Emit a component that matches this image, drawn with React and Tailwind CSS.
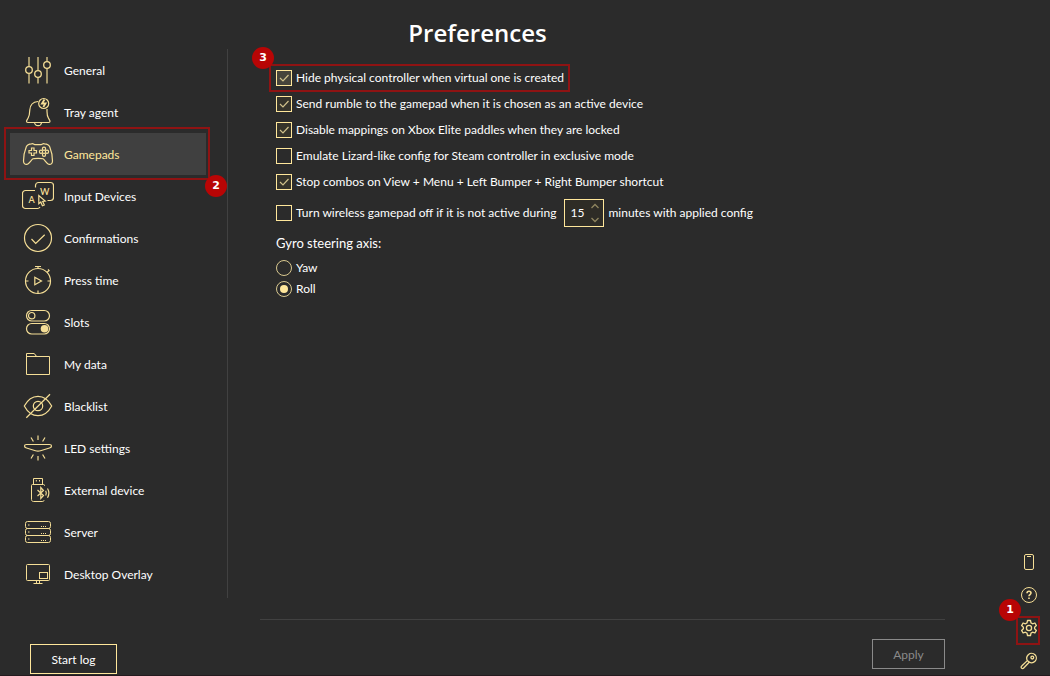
import { useState } from "react";
import clsx from "clsx";

const icons = {
  general: (
    <>
      <g stroke="#a1946a" strokeWidth="2">
        <path d="M7 3v9M7 20v9.500M16 3v13M16 24v5.500M25 3v4M25 15v14.500" />
      </g>
      <circle cx="7" cy="16" r="3.300" strokeWidth="1.300" />
      <circle cx="16" cy="20" r="3.300" strokeWidth="1.300" />
      <circle cx="25" cy="11" r="3.300" strokeWidth="1.300" />
    </>
  ),
  tray: (
    <g strokeWidth="1.200">
      <path d="M16 5.500C10.500 6 8 9.500 7.800 14c-.1 4-.4 6-1.800 8.300-.8 1.400-1.500 2.200-1.500 3 0 .8.500 1.200 1.300 1.200h21c.8 0 1.200-.5 1.200-1.200 0-.8-.8-1.800-1.500-3-1.200-2-1.500-4-1.500-6.800v-2.500" />
      <path d="M12.500 26.500c.3 2 1.700 3.200 3.600 3.200s3.200-1.200 3.600-3.200" />
      <circle cx="21.700" cy="7.500" r="5" />
      <path d="M22.500 3.500l-2.500 4h3.500l-2.200 3.500" strokeWidth="1.800" />
    </g>
  ),
  gamepads: (
    <g strokeWidth="1.200">
      <path d="M9.500 5.800c2-.5 2.500.9 4 .9h5c1.500 0 2-1.400 4-.9 2.800.2 4.300.8 5.200 3 1.600 4 2.900 9.800 2.800 14.200 0 2.600-1.800 4-3.900 3.200-2.200-.8-3.600-4.200-5.600-5.400-1-.6-8.900-.6-10 0-2 1.200-3.400 4.600-5.600 5.400-2.100.8-3.900-.6-3.900-3.200-.1-4.400 1.200-10.200 2.800-14.200.9-2.200 2.400-2.800 5.200-3z" />
      <path d="M9.500 10h2.500v2.500h2.500v2.500h-2.500v2.500h-2.500v-2.500h-2.500v-2.500h2.500z" />
      <circle cx="22" cy="10.700" r="1.600" />
      <circle cx="22" cy="16.700" r="1.600" />
      <circle cx="19" cy="13.700" r="1.600" />
      <circle cx="25" cy="13.700" r="1.600" />
    </g>
  ),
  input: (
    <g strokeWidth="1.200">
      <path d="M13.500 7.500v-2a3 3 0 0 1 3-3h12a3 3 0 0 1 3 3v12a3 3 0 0 1-3 3h-3" />
      <path d="M13 10.500H3.500a3 3 0 0 0-3 3v12a3 3 0 0 0 3 3h12a3 3 0 0 0 2.500-1.500" />
      <path d="M16.800 15.500v8.300l2-1.700 1.600 3.600 1.900-.8-1.600-3.500 2.500-.3z" />
      <text x="6.500" y="23" fontSize="9" fontWeight="600" fill="currentColor" stroke="none">A</text>
      <text x="18" y="14.500" fontSize="9" fontWeight="600" fill="currentColor" stroke="none">W</text>
    </g>
  ),
  confirmations: (
    <g strokeWidth="1.200">
      <circle cx="16" cy="16" r="13.500" />
      <path d="M9.500 17l4.200 4.500 9-8.800" />
    </g>
  ),
  press: (
    <g strokeWidth="1.200">
      <circle cx="16" cy="17" r="12.500" />
      <path d="M13 2.500h6M16 2.500v2M25 8.500l2-2M26 5.500l1.500 1.500M3.500 17h3M25.500 17h3M16 26.500v3" />
      <path d="M12.800 13.200v7.600l6.700-3.800z" />
    </g>
  ),
  slots: (
    <g strokeWidth="1.200">
      <rect x="4.500" y="4.500" width="23" height="10.500" rx="5.200" />
      <rect x="4.500" y="17.500" width="23" height="10.500" rx="5.200" />
      <circle cx="9.700" cy="9.700" r="3.200" />
      <circle cx="22.500" cy="22.700" r="3.800" fill="currentColor" stroke="none" />
    </g>
  ),
  data: <path d="M4.500 8.500h23v18h-23v-21h7.500c1.200 0 1.500 3 3 3" />,
  blacklist: (
    <g strokeWidth="1.200">
      <path d="M2.300 16C5.500 10 10.500 6.300 16 6.300S26.500 10 29.700 16C26.500 22 21.500 25.700 16 25.700S5.500 22 2.300 16z" />
      <circle cx="16" cy="16" r="4.700" />
      <path d="M4.300 27.700L28 4.300" />
    </g>
  ),
  led: (
    <g strokeWidth="1.200">
      <path d="M2.500 14c0-.9.900-1.500 2-1.500h23c1.100 0 2 .6 2 1.500 0 1-.8 1.700-2 2l-9 2.800c-1.800.6-3.200.6-5 0L4.500 16c-1.200-.3-2-1-2-2z" />
      <path d="M9 5.500l2.400 4M23 5.500l-2.400 4M11.400 22.500L9 26.500M20.600 22.500l2.400 4" />
      <path d="M16 3.500v4.500M16 24v4.500" stroke="#a1946a" strokeWidth="2" />
    </g>
  ),
  external: (
    <>
      <path d="M22.500 12v-.5a1 1 0 0 0-1-1h-11a1 1 0 0 0-1 1v14c0 1.200.8 2 2 2h8.500c1.200 0 2-.5 2.300-1.500" />
      <path d="M11.500 10.500v-6h9v6M14.300 6v1.500M17.500 6v1.500" />
      <path d="M15.500 16l6 5.500-2.700 3v-11l2.700 3-6 5.500" strokeWidth="1.200" />
      <path d="M23.700 16.800c.8 1.500.8 3.200 0 4.700M25.500 14.500c1.800 3 1.800 6.200 0 9.200" strokeWidth="1.200" />
    </>
  ),
  server: (
    <>
      <rect x="3.500" y="5.500" width="25" height="7" rx="2" />
      <rect x="3.500" y="12.500" width="25" height="7" rx="2" />
      <rect x="3.500" y="19.500" width="25" height="7" rx="2" />
      <path d="M6 9h1.500M6 16h1.500M6 23h1.500M19 10.500h1M21 10.500h1M23 10.500h1M19 17.500h1M21 17.500h1M23 17.500h1M19 24.500h1M21 24.500h1M23 24.500h1" />
    </>
  ),
  overlay: (
    <>
      <rect x="4.500" y="6.500" width="23" height="16" rx="1" />
      <rect x="17.500" y="14.500" width="8" height="6" />
      <path d="M14.500 22.500v3M17.500 22.500v3M11.500 25.500h9" />
    </>
  ),
};

const sections = [
  { id: "general", label: "General" },
  { id: "tray", label: "Tray agent" },
  { id: "gamepads", label: "Gamepads" },
  { id: "input", label: "Input Devices" },
  { id: "confirmations", label: "Confirmations" },
  { id: "press", label: "Press time" },
  { id: "slots", label: "Slots" },
  { id: "data", label: "My data" },
  { id: "blacklist", label: "Blacklist" },
  { id: "led", label: "LED settings" },
  { id: "external", label: "External device" },
  { id: "server", label: "Server" },
  { id: "overlay", label: "Desktop Overlay" },
];

const options = [
  { label: "Hide physical controller when virtual one is created", checked: true, step: 3 },
  { label: "Send rumble to the gamepad when it is chosen as an active device", checked: true },
  { label: "Disable mappings on Xbox Elite paddles when they are locked", checked: true },
  { label: "Emulate Lizard-like config for Steam controller in exclusive mode", checked: false },
  { label: "Stop combos on View + Menu + Left Bumper + Right Bumper shortcut", checked: true },
];

function StepBadge({ number, className }) {
  return (
    <span
      className={clsx(
        "absolute z-10 flex size-[22px] items-center justify-center rounded-full bg-[#b80505] font-['DejaVu_Sans',sans-serif] text-[11px] font-bold text-white",
        className
      )}
    >
      {number}
    </span>
  );
}

function Frame({ className }) {
  return <span className={clsx("pointer-events-none absolute border-2 border-[#8f1313]", className)} />;
}

function Checkbox({ id, defaultChecked, highlighted }) {
  return (
    <span className="relative flex size-4 shrink-0">
      <input
        id={id}
        type="checkbox"
        defaultChecked={defaultChecked}
        className={clsx(
          "peer size-4 appearance-none border border-[#ffe79b]",
          highlighted ? "checked:bg-[#46443b]" : "checked:bg-[#35332a]"
        )}
      />
      <svg
        viewBox="0 0 16 16"
        className="pointer-events-none absolute inset-0 hidden size-4 fill-none stroke-[#cfc08a] peer-checked:block"
      >
        <path d="M4 8l3 3 5.500-6" strokeWidth="1.200" />
      </svg>
    </span>
  );
}

function Radio({ label, checked, onChange }) {
  return (
    <label className="flex h-[21px] items-center gap-1">
      <span className="relative flex size-4">
        <input
          type="radio"
          name="axis"
          checked={checked}
          onChange={onChange}
          className="peer size-4 appearance-none rounded-full border border-[#d8c88f]"
        />
        <span className="pointer-events-none absolute inset-1 hidden rounded-full bg-[#ffe79b] peer-checked:block" />
      </span>
      <span className="pt-px">{label}</span>
    </label>
  );
}

function Sidebar({ active, setActive }) {
  return (
    <nav className="min-h-[549px] border-r border-[#414141] pr-[21px]">
      {sections.map(({ id, label }) => {
        const isActive = active === id;

        return (
          <div key={id} className="relative pl-[10px]">
            <button
              onClick={() => setActive(id)}
              className={clsx(
                "flex h-[42px] w-full items-center gap-[10px] pl-3 text-left",
                isActive ? "bg-[#404040] text-[#ffe79b]" : "text-white"
              )}
            >
              <svg viewBox="0 0 32 32" className="size-8 fill-none stroke-current text-[#f5de96]">
                {icons[id]}
              </svg>
              <span className="pt-[2px]">{label}</span>
            </button>
            {id === "gamepads" && (
              <>
                <Frame className="-top-[6px] -right-1 -bottom-[5px] left-1" />
                <StepBadge number={2} className="-right-[21px] -bottom-[22px]" />
              </>
            )}
          </div>
        );
      })}
    </nav>
  );
}

function Rail() {
  const button = "relative flex h-7 w-[22px] items-center justify-center";
  const drawing = "size-[18px] fill-none stroke-[#f5de96]";

  return (
    <div className="flex w-[95px] flex-col items-end justify-end gap-[5px] pr-[10px]">
      <button aria-label="Phone" className={button}>
        <svg viewBox="0 0 18 18" className={drawing}>
          <rect x="4.500" y="1.500" width="9" height="15" rx="1.500" />
          <path d="M7 3.500h4" />
        </svg>
      </button>
      <button aria-label="Help" className={button}>
        <svg viewBox="0 0 18 18" className={drawing}>
          <circle cx="9" cy="9" r="7.500" />
          <path d="M7 7.300c0-1.300.8-2.100 2-2.100s2 .8 2 1.900c0 1.500-2 1.600-2 3.200M9 11.500v1.500" strokeWidth="1.600" />
        </svg>
      </button>
      <button aria-label="Settings" className={button}>
        <svg viewBox="0 0 18 18" className={drawing} strokeWidth="1.300" strokeLinejoin="round">
          <path d="M7.500 1.500h3l.5 2.400 1.600.9 2.300-.8 1.500 2.600-1.800 1.600v1.600l1.800 1.600-1.500 2.600-2.300-.8-1.600.9-.5 2.400h-3L7 14.100l-1.600-.9-2.300.8-1.500-2.600 1.800-1.600V8.200L1.600 6.600 3.100 4l2.300.8L7 3.900z" />
          <circle cx="9" cy="9" r="2.600" />
        </svg>
        <Frame className="right-0 -bottom-[3px] -left-[2px] top-[2px]" />
        <StepBadge number={1} className="-top-[15px] -left-[19px]" />
      </button>
      <button aria-label="License" className={button}>
        <svg viewBox="0 0 18 18" className={drawing} strokeWidth="1.300" strokeLinejoin="round">
          <path d="M7.300 8.600c-1-2-.6-4.400 1-5.900 1.900-1.700 4.900-1.700 6.700.1s1.700 4.700 0 6.500c-1.500 1.500-3.900 1.800-5.800.9L3.700 16c-.6.700-1.600.7-2.200.1s-.5-1.500.2-2.100z" />
          <circle cx="12.300" cy="5.600" r="1.400" />
          <path d="M9.300 10.200L7.300 8.600" />
        </svg>
      </button>
    </div>
  );
}

export default function App() {
  const [active, setActive] = useState("gamepads");
  const [minutes, setMinutes] = useState(15);
  const [axis, setAxis] = useState("Roll");

  return (
    <div className="flex min-h-screen border-b border-[#241a1e] bg-[#2b2b2b] font-['Lato',sans-serif] text-[12px] leading-4 text-white">
      <div className="flex flex-1 flex-col">
        <header className="flex h-[49px] items-center justify-center pt-4">
          <h1 className="font-['Open_Sans',sans-serif] text-[24px] leading-8 font-semibold">Preferences</h1>
        </header>

        <div className="flex flex-1">
          <aside className="flex w-[228px] shrink-0 flex-col justify-between">
            <Sidebar active={active} setActive={setActive} />
            <button className="mb-px ml-[30px] h-[30px] w-[87px] border border-[#ffe79b] pt-[2px]">Start log</button>
          </aside>

          <main className="flex flex-1 flex-col pr-[10px] pl-8">
            <div className="flex flex-col items-start pt-4 pl-4">
              {options.map((option, i) => (
                <div key={i} className="relative flex h-[26px] items-center gap-1">
                  <Checkbox id={`option-${i}`} defaultChecked={option.checked} highlighted={Boolean(option.step)} />
                  <label htmlFor={`option-${i}`}>{option.label}</label>
                  {option.step && (
                    <>
                      <Frame className="-top-px -right-[6px] -bottom-px -left-[7px]" />
                      <StepBadge number={option.step} className="-top-[18px] -left-6" />
                    </>
                  )}
                </div>
              ))}

              <div className="flex h-9 items-center gap-1">
                <Checkbox id="turn-off" />
                <label htmlFor="turn-off">Turn wireless gamepad off if it is not active during</label>
                <div className="ml-1 flex h-7 w-10 items-center border border-[#ffe79b] bg-[#2e2c26]">
                  <input
                    type="number"
                    aria-label="Minutes"
                    value={minutes}
                    onChange={(e) => setMinutes(Number(e.target.value))}
                    className="w-[25px] [appearance:textfield] pl-[5px] text-[12px] outline-none [&::-webkit-inner-spin-button]:appearance-none"
                  />
                  <div className="flex flex-col gap-[6px] text-[#8f855f]">
                    <button aria-label="More" className="block" onClick={() => setMinutes(minutes + 1)}>
                      <svg viewBox="0 0 10 8" className="h-2 w-[10px] fill-none stroke-current">
                        <path d="M1.500 6L5 2.500 8.500 6" strokeWidth="1.300" />
                      </svg>
                    </button>
                    <button aria-label="Less" className="block" onClick={() => setMinutes(minutes - 1)}>
                      <svg viewBox="0 0 10 8" className="h-2 w-[10px] fill-none stroke-current">
                        <path d="M1.500 2L5 5.500 8.500 2" strokeWidth="1.300" />
                      </svg>
                    </button>
                  </div>
                </div>
                <span>minutes with applied config</span>
              </div>

              <fieldset>
                <legend className="pt-1 pb-[6px] text-[13px]">Gyro steering axis:</legend>
                {["Yaw", "Roll"].map((name) => (
                  <Radio key={name} label={name} checked={axis === name} onChange={() => setAxis(name)} />
                ))}
              </fieldset>
            </div>

            <footer className="mt-auto flex justify-end border-t border-[#414141] pt-[19px] pb-[6px]">
              <button className="h-[30px] w-[73px] border border-[#8a8a8a] pt-[2px] text-[12px] text-[#8a8a8a]">
                Apply
              </button>
            </footer>
          </main>
        </div>
      </div>

      <Rail />
    </div>
  );
}
